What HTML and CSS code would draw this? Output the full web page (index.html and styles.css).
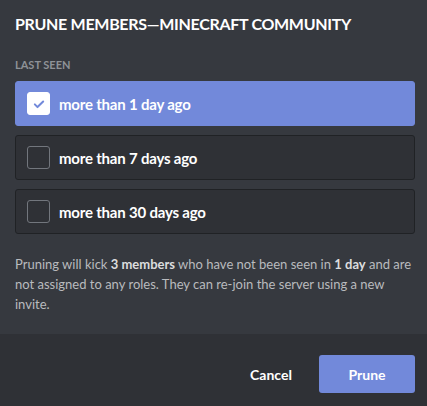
FILE: index.html
```html
<!DOCTYPE html>
<html>
  <head>
    <title>Prune Members</title>
    <link rel="stylesheet" href="styles.css">
  </head>
  <body>
    <main class="modal">
      <section class="content">
        <h1 class="title">Prune Members&mdash;Minecraft Community</h1>
        <h2 class="label">Last seen</h2>
        <div class="options">
          <div class="option checked">
            <span class="box">
              <svg viewBox="0 0 24 24" fill="none" stroke="#7289da" stroke-width="2.4" stroke-linecap="round" stroke-linejoin="round">
                <path d="M7 12.5l3.2 3.2L17 9" />
              </svg>
            </span>
            <span class="option-text">more than 1 day ago</span>
          </div>
          <div class="option">
            <span class="box"></span>
            <span class="option-text">more than 7 days ago</span>
          </div>
          <div class="option">
            <span class="box"></span>
            <span class="option-text">more than 30 days ago</span>
          </div>
        </div>
        <p class="note">
          Pruning will kick <strong>3 members</strong> who have not been seen in
          <strong>1 day</strong> and are not assigned to any roles. They can
          re-join the server using a new invite.
        </p>
      </section>
      <footer class="footer">
        <button class="btn cancel">Cancel</button>
        <button class="btn prune">Prune</button>
      </footer>
    </main>
  </body>
</html>
```

FILE: styles.css
```css
*,
*::after,
*::before {
  margin: 0;
  padding: 0;
  box-sizing: border-box;
}

body {
  background-color: #36393f;
  font-family: Lato, "Noto Sans", sans-serif;
  height: 100vh;
  overflow: hidden;
}

.modal {
  display: flex;
  flex-direction: column;
  height: 100vh;
}

.content {
  flex: 1;
  padding: 14px 12px 0 15px;
}

.title {
  color: #fff;
  font-size: 16px;
  line-height: 20px;
  font-weight: 700;
  letter-spacing: -0.3px;
  text-transform: uppercase;
}

.label {
  margin-top: 24px;
  color: #8e9297;
  font-size: 11px;
  line-height: 14px;
  font-weight: 700;
  text-transform: uppercase;
}

.options {
  display: flex;
  flex-direction: column;
  gap: 9px;
  margin-top: 9px;
}

.option {
  display: flex;
  align-items: center;
  gap: 9px;
  height: 45px;
  padding-left: 11px;
  background-color: #2f3136;
  border: 1px solid #202225;
  border-radius: 3px;
}

.option.checked {
  background-color: #7289da;
  border-color: #7289da;
}

.box {
  display: flex;
  align-items: center;
  justify-content: center;
  width: 23px;
  height: 23px;
  border: 1px solid #72767d;
  border-radius: 3px;
}

.checked .box {
  background-color: #fff;
  border-color: #fff;
}

.box svg {
  width: 20px;
  height: 20px;
}

.option-text {
  color: #fff;
  font-size: 15px;
  font-weight: 700;
  letter-spacing: -0.2px;
}

.note {
  margin-top: 20px;
  color: #b9bbbe;
  font-size: 13px;
  line-height: 20px;
}

.note strong {
  color: #dcddde;
  font-weight: 700;
}

.footer {
  display: flex;
  justify-content: flex-end;
  height: 72px;
  padding: 21px 12px 0 0;
  background-color: #2f3136;
}

.btn {
  width: 96px;
  height: 38px;
  border: none;
  border-radius: 3px;
  color: #fff;
  font-family: inherit;
  font-size: 14px;
  font-weight: 700;
  background: none;
}

.prune {
  background-color: #7289da;
}
```
